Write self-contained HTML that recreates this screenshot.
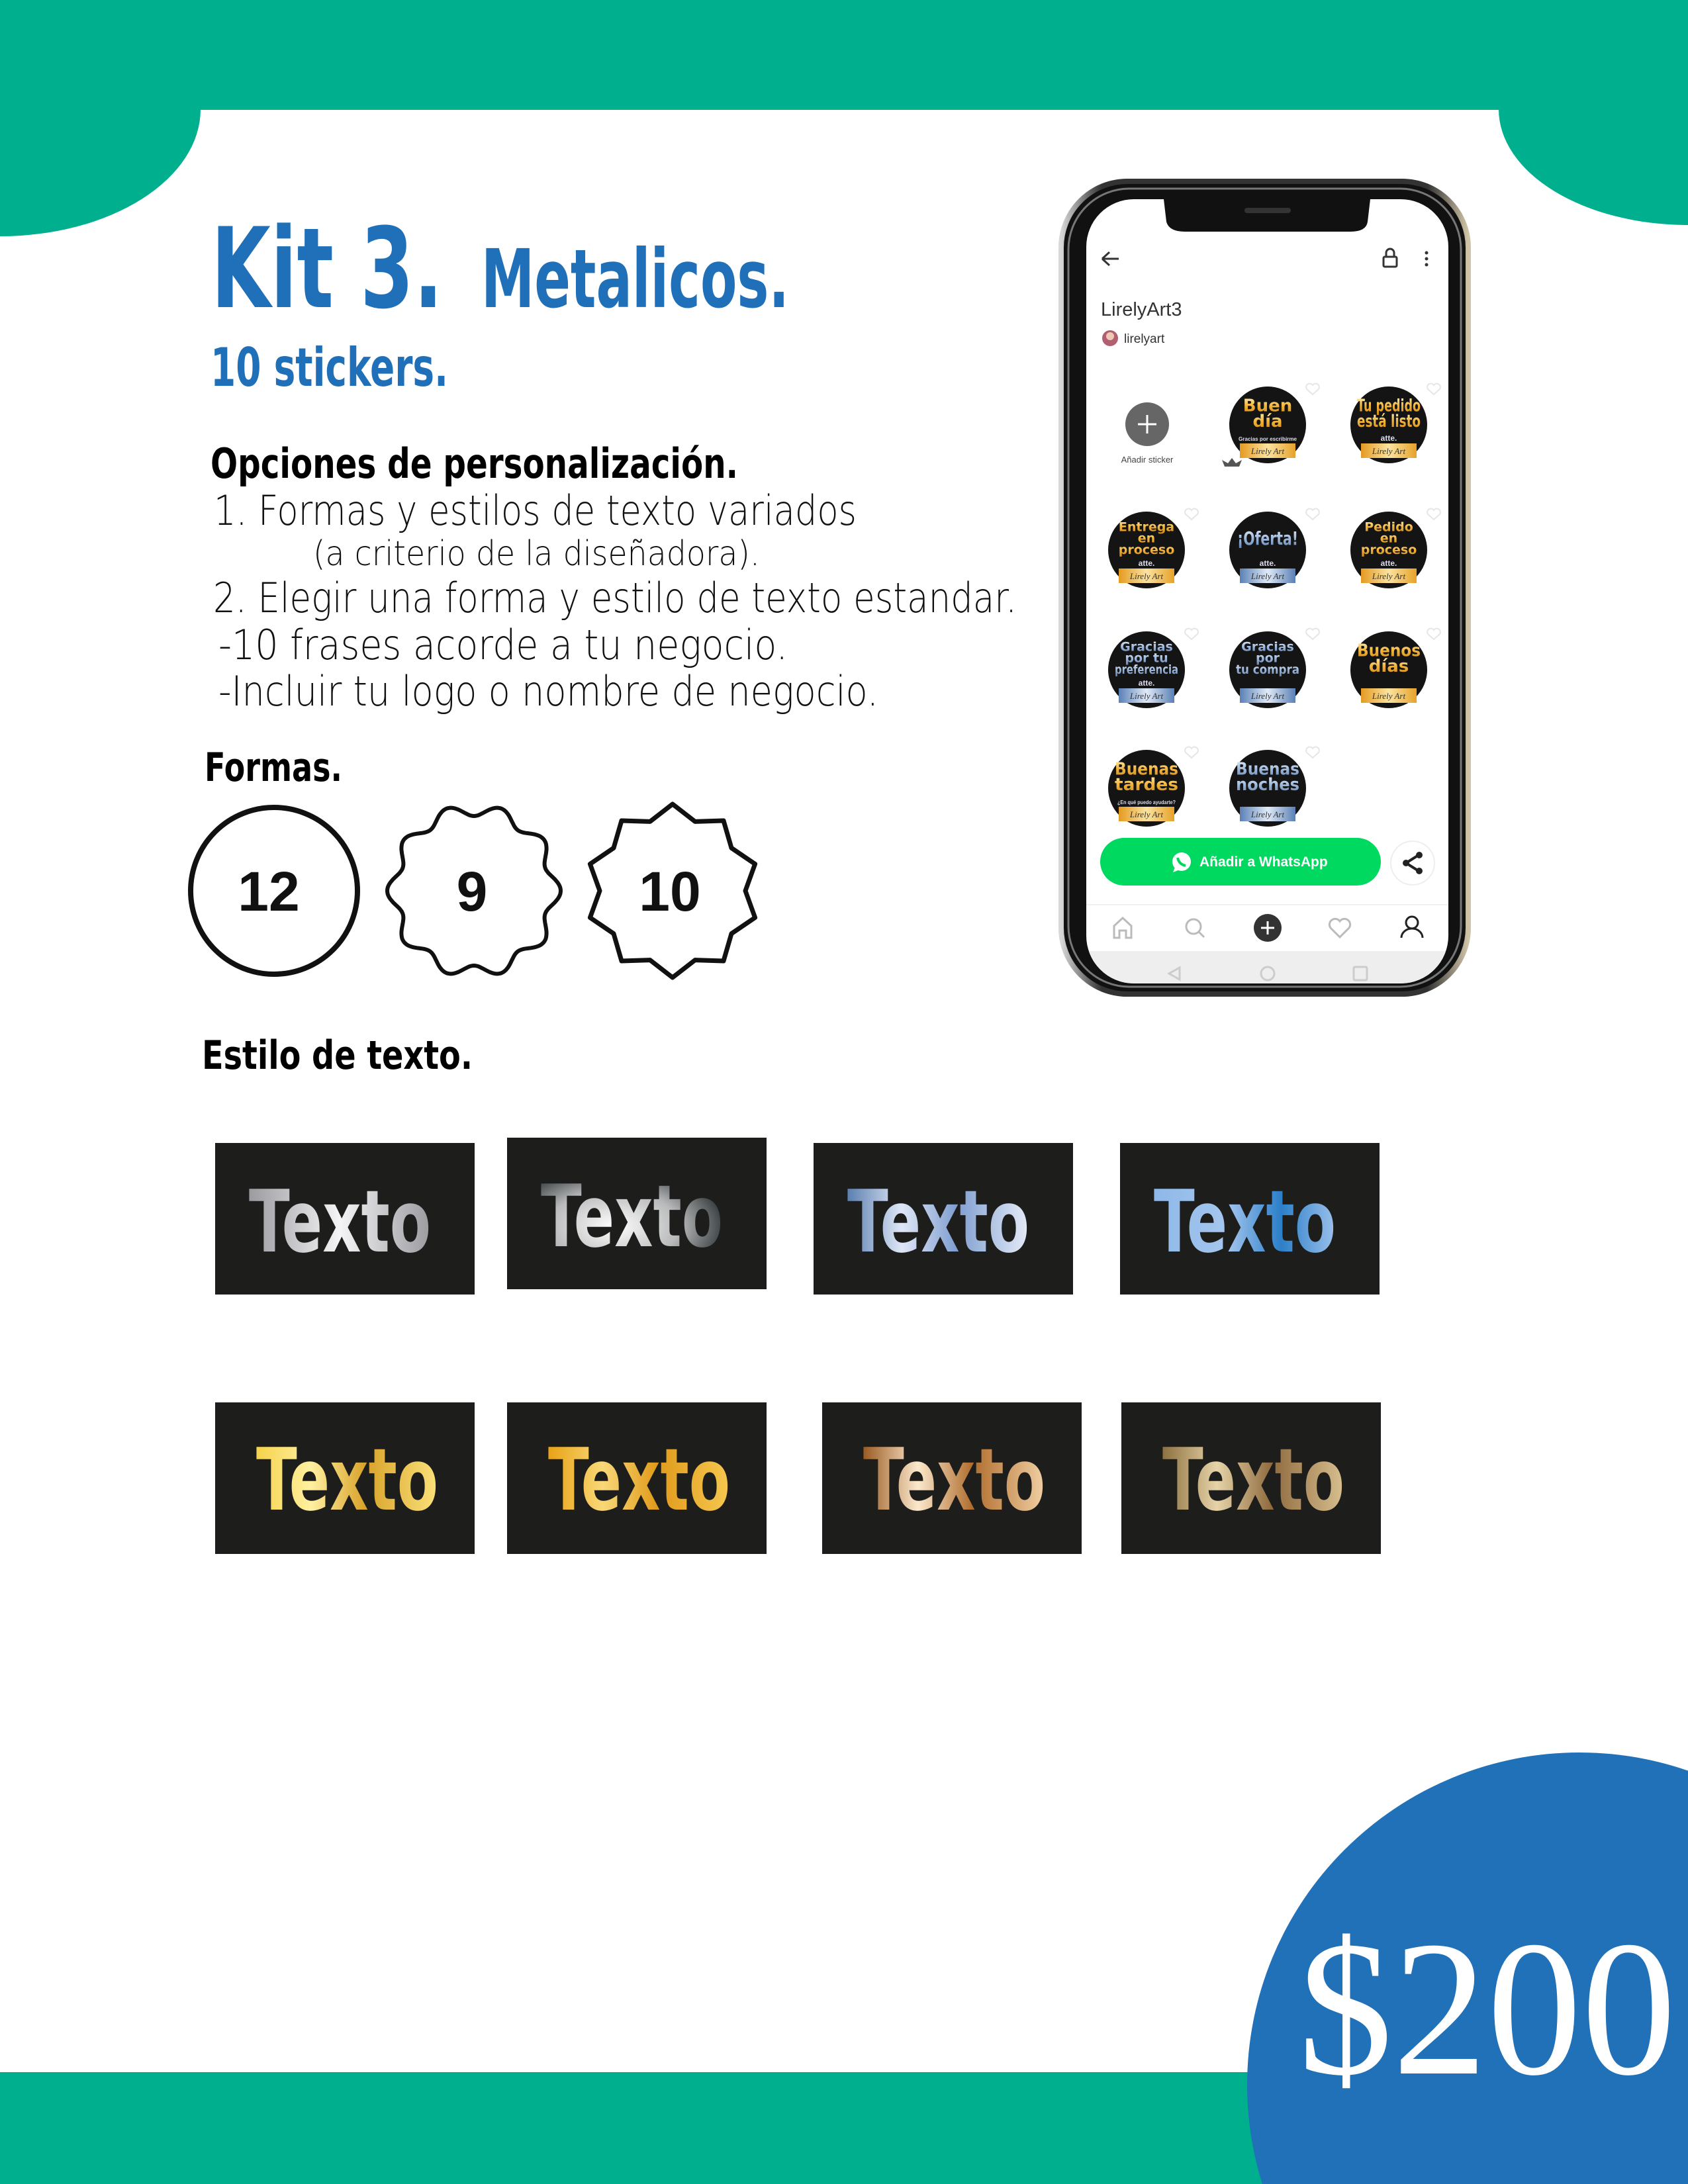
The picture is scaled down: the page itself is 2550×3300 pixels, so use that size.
<!DOCTYPE html>
<html><head><meta charset="utf-8"><style>
html,body{margin:0;padding:0;background:#fff;width:2550px;height:3300px;overflow:hidden}
svg{display:block}
</style></head><body>
<svg id="s" xmlns="http://www.w3.org/2000/svg" width="2550" height="3300" viewBox="0 0 2550 3300">
<defs>
<linearGradient id="g1" x1="0" x2="1" spreadMethod="repeat"><stop offset="0" stop-color="#9b9a9f"/><stop offset=".5" stop-color="#f4f4f6"/><stop offset="1" stop-color="#9b9a9f"/></linearGradient>
<radialGradient id="g2" cx=".4" cy=".6" r=".6"><stop offset="0" stop-color="#ffffff"/><stop offset=".6" stop-color="#b8b9ba"/><stop offset="1" stop-color="#3e4446"/></radialGradient>
<linearGradient id="g3" x1="0" x2="1"><stop offset="0" stop-color="#5b7fb0"/><stop offset=".3" stop-color="#dfe7f7"/><stop offset=".6" stop-color="#7f9ed0"/><stop offset="1" stop-color="#e6ecf8"/></linearGradient>
<linearGradient id="g4" x1="0" x2="1"><stop offset="0" stop-color="#8eb8e8"/><stop offset=".4" stop-color="#a5c6ee"/><stop offset=".7" stop-color="#2c7fc8"/><stop offset="1" stop-color="#9cc1ec"/></linearGradient>
<linearGradient id="g5" x1="0" x2="1"><stop offset="0" stop-color="#f5d24a"/><stop offset=".3" stop-color="#fff0a0"/><stop offset=".6" stop-color="#d8a22a"/><stop offset="1" stop-color="#fbe27a"/></linearGradient>
<linearGradient id="g6" x1="0" x2="1"><stop offset="0" stop-color="#e8a215"/><stop offset=".3" stop-color="#f9d877"/><stop offset=".6" stop-color="#e09a1a"/><stop offset="1" stop-color="#f6c850"/></linearGradient>
<linearGradient id="g7" x1="0" x2="1"><stop offset="0" stop-color="#9a5a22"/><stop offset=".3" stop-color="#fbe8cc"/><stop offset=".6" stop-color="#b06d2e"/><stop offset="1" stop-color="#f1d0a4"/></linearGradient>
<linearGradient id="g8" x1="0" x2="1"><stop offset="0" stop-color="#8c7040"/><stop offset=".3" stop-color="#e6d3a8"/><stop offset=".6" stop-color="#8f6a3e"/><stop offset="1" stop-color="#d8c090"/></linearGradient>
<linearGradient id="gold" x1="0" x2="0" y1="0" y2="1"><stop offset="0" stop-color="#fff0b0"/><stop offset=".5" stop-color="#f2b33a"/><stop offset="1" stop-color="#c98416"/></linearGradient>
<linearGradient id="blue" x1="0" x2="0" y1="0" y2="1"><stop offset="0" stop-color="#e8f0fb"/><stop offset=".5" stop-color="#9fb9dc"/><stop offset="1" stop-color="#5d80b0"/></linearGradient>
<linearGradient id="lgold" x1="0" x2="1"><stop offset="0" stop-color="#e49a20"/><stop offset=".5" stop-color="#fbe3a0"/><stop offset="1" stop-color="#e6a22a"/></linearGradient>
<linearGradient id="lblue" x1="0" x2="1"><stop offset="0" stop-color="#5a80b5"/><stop offset=".5" stop-color="#e0eaf8"/><stop offset="1" stop-color="#5a80b5"/></linearGradient>
<linearGradient id="frame" x1="0" x2="1"><stop offset="0" stop-color="#d8d8d8"/><stop offset=".1" stop-color="#333"/><stop offset=".9" stop-color="#333"/><stop offset="1" stop-color="#d0c4a8"/></linearGradient>
<clipPath id="scr"><rect x="1641" y="301" width="547" height="1185" rx="72"/></clipPath>
</defs>

<rect x="0" y="0" width="2550" height="166" fill="#00AF8E"/>
<ellipse cx="0" cy="165" rx="303" ry="192" fill="#00AF8E"/>
<ellipse cx="2550" cy="165" rx="286" ry="175" fill="#00AF8E"/>
<rect x="0" y="3131" width="2550" height="169" fill="#00AF8E"/>
<circle cx="2386" cy="3150" r="502" fill="#2071B8"/>
<text x="1961" y="3133" font-family="Liberation Serif, serif" font-size="292" fill="#fff" textLength="571" lengthAdjust="spacingAndGlyphs">$200</text>

<g font-family="DejaVu Sans, sans-serif" font-weight="bold" fill="#1F70B8">
<text x="319" y="464" font-size="168" textLength="350" lengthAdjust="spacingAndGlyphs">Kit 3.</text>
<text x="727" y="464" font-size="122" textLength="465" lengthAdjust="spacingAndGlyphs">Metalicos.</text>
<text x="318" y="583" font-size="80" textLength="359" lengthAdjust="spacingAndGlyphs">10 stickers.</text>
</g>
<g font-family="DejaVu Sans, sans-serif" font-weight="bold" fill="#000">
<text x="318" y="722" font-size="62" textLength="797" lengthAdjust="spacingAndGlyphs">Opciones de personalización.</text>
<text x="309" y="1180" font-size="60" textLength="208" lengthAdjust="spacingAndGlyphs">Formas.</text>
<text x="305" y="1615" font-size="60" textLength="409" lengthAdjust="spacingAndGlyphs">Estilo de texto.</text>
</g>
<g font-family="DejaVu Sans, sans-serif" fill="#111" font-size="62" style="font-weight:200">
<text x="323" y="793" textLength="971" lengthAdjust="spacingAndGlyphs">1. Formas y estilos de texto variados</text>
<text x="473" y="854" font-size="52" textLength="675" lengthAdjust="spacingAndGlyphs">(a criterio de la diseñadora).</text>
<text x="322" y="925" textLength="1214" lengthAdjust="spacingAndGlyphs">2. Elegir una forma y estilo de texto estandar.</text>
<text x="330" y="996" textLength="860" lengthAdjust="spacingAndGlyphs">-10 frases acorde a tu negocio.</text>
<text x="330" y="1066" textLength="997" lengthAdjust="spacingAndGlyphs">-Incluir tu logo o nombre de negocio.</text>
</g>

<circle cx="414" cy="1346" r="126" fill="none" stroke="#111" stroke-width="8"/>
<path id="st9" fill="none" stroke="#111" stroke-width="6"/>
<path id="st10" fill="none" stroke="#111" stroke-width="7" stroke-linejoin="round"/>
<g font-family="Liberation Sans, sans-serif" font-weight="bold" font-size="84" fill="#111" text-anchor="middle">
<text x="406" y="1376">12</text>
<text x="713" y="1376">9</text>
<text x="1012" y="1376">10</text>
</g>

<g id="boxes" font-family="DejaVu Sans, sans-serif" font-weight="bold" font-size="130"></g>

<rect x="1603" y="274" width="615" height="1228" rx="100" fill="#111" stroke="url(#frame)" stroke-width="8"/>
<rect x="1614" y="285" width="593" height="1206" rx="92" fill="none" stroke="#777" stroke-width="3"/>
<g clip-path="url(#scr)">
<rect x="1641" y="301" width="547" height="1185" fill="#fff"/>
<path d="M1758 301 L1762 335 Q1766 350 1790 350 L2040 350 Q2064 350 2066 335 L2070 301 Z" fill="#111"/>
<rect x="1880" y="314" width="70" height="8" rx="4" fill="#333"/>
<path d="M1665 391 H1690 M1665 391 L1676 381 M1665 391 L1676 401" stroke="#333" stroke-width="3" fill="none"/>
<rect x="2090" y="388" width="20" height="15" rx="2" fill="none" stroke="#333" stroke-width="3"/>
<path d="M2094 388 V382 a6 6 0 0 1 12 0 V388" fill="none" stroke="#333" stroke-width="3"/>
<circle cx="2155" cy="382" r="2.5" fill="#333"/><circle cx="2155" cy="391" r="2.5" fill="#333"/><circle cx="2155" cy="400" r="2.5" fill="#333"/>
<text x="1663" y="477" font-family="Liberation Sans, sans-serif" font-size="29" fill="#333">LirelyArt3</text>
<circle cx="1677" cy="511" r="12" fill="#b06070"/><circle cx="1677" cy="508" r="6" fill="#f0c8b8"/>
<text x="1698" y="518" font-family="Liberation Sans, sans-serif" font-size="19" fill="#333">lirelyart</text>
<circle cx="1733" cy="641" r="33" fill="#666"/>
<path d="M1733 627 V655 M1719 641 H1747" stroke="#fff" stroke-width="3"/>
<text x="1733" y="699" text-anchor="middle" font-family="Liberation Sans, sans-serif" font-size="13" fill="#444">Añadir sticker</text>
<g id="stk"></g>
<path d="M1850 705 l-4 -10 l9 5 l6 -8 l6 8 l9 -5 l-4 10 z" fill="#555"/>
<rect x="1662" y="1266" width="424" height="72" rx="36" fill="#00D95F"/>
<circle cx="1785" cy="1302" r="14" fill="#fff"/><path d="M1772 1318 l4 -10 l6 6z" fill="#fff"/>
<path d="M1779 1296 q2 10 12 12" stroke="#00D95F" stroke-width="4" fill="none"/>
<text x="1812" y="1309" font-family="Liberation Sans, sans-serif" font-size="21" font-weight="bold" fill="#fff">Añadir a WhatsApp</text>
<circle cx="2134" cy="1304" r="33" fill="#fff" stroke="#eee" stroke-width="2"/>
<path d="M2143 1292 L2124 1304 L2143 1316" stroke="#222" stroke-width="4" fill="none"/>
<circle cx="2144" cy="1292" r="5" fill="#222"/><circle cx="2124" cy="1304" r="5" fill="#222"/><circle cx="2144" cy="1316" r="5" fill="#222"/>
<line x1="1641" y1="1367" x2="2188" y2="1367" stroke="#f0f0f0" stroke-width="2"/>
<path d="M1683 1417 V1399 L1696 1387 L1709 1399 V1417 H1701 V1406 H1691 V1417 Z" fill="none" stroke="#bbb" stroke-width="3"/>
<circle cx="1803" cy="1400" r="11" fill="none" stroke="#bbb" stroke-width="3"/><path d="M1811 1408 L1819 1416" stroke="#bbb" stroke-width="3"/>
<circle cx="1915" cy="1402" r="21" fill="#333"/><path d="M1915 1392 V1412 M1905 1402 H1925" stroke="#fff" stroke-width="3"/>
<path d="M2024 1416 L2010 1402 a8 8 0 0 1 14 -10 a8 8 0 0 1 14 10 Z" fill="none" stroke="#bbb" stroke-width="3"/>
<circle cx="2133" cy="1394" r="9" fill="none" stroke="#222" stroke-width="3"/><path d="M2117 1417 a16 14 0 0 1 32 0" fill="none" stroke="#222" stroke-width="3"/>
<rect x="1641" y="1437" width="547" height="60" fill="#eeeeee"/>
<path d="M1782 1462 L1766 1471 L1782 1480 Z" fill="none" stroke="#ccc" stroke-width="3"/>
<circle cx="1915" cy="1471" r="10" fill="none" stroke="#ccc" stroke-width="3"/>
<rect x="2045" y="1461" width="20" height="20" rx="2" fill="none" stroke="#ccc" stroke-width="3"/>
</g>
</svg>
<script>
var NS="http://www.w3.org/2000/svg";
function el(t,a,p,txt){var e=document.createElementNS(NS,t);for(var k in a)e.setAttribute(k,a[k]);if(txt!=null)e.textContent=txt;p.appendChild(e);return e;}
(function(){var cx=716,cy=1346,d="";for(var i=0;i<=360;i++){var t=i*Math.PI/180;var r=122+9*Math.cos(10*t+Math.PI);var a=t-Math.PI/2;var x=cx+r*Math.cos(a),y=cy+r*Math.sin(a);d+=(i?"L":"M")+x.toFixed(1)+" "+y.toFixed(1);}document.getElementById("st9").setAttribute("d",d+"Z");
var cx2=1016,d2="";for(var j=0;j<20;j++){var r2=j%2?110:131;var a2=j*Math.PI/10-Math.PI/2;d2+=(j?"L":"M")+(cx2+r2*Math.cos(a2)).toFixed(1)+" "+(cy+r2*Math.sin(a2)).toFixed(1);}document.getElementById("st10").setAttribute("d",d2+"Z");})();
(function(){var g=document.getElementById("boxes");
var B=[[325,1727,"g1"],[766,1719,"g2"],[1229,1727,"g3"],[1692,1727,"g4"],[325,2119,"g5"],[766,2119,"g6"],[1242,2119,"g7"],[1694,2119,"g8"]];
B.forEach(function(b,i){el("rect",{x:b[0],y:b[1],width:392,height:229,fill:"#1d1d1b"},g);
var off=i<4?51:62;var by=i<4?164:162;
el("text",{x:b[0]+off,y:b[1]+by,fill:"url(#"+b[2]+")",textLength:275,lengthAdjust:"spacingAndGlyphs"},g,"Texto");});})();
(function(){var g=document.getElementById("stk");var cols=[1732,1915,2098],rows=[642,831,1012,1191];
var S=[[1,0,["Buen","día"],"gold","Gracias por escribirme"],[2,0,["Tu pedido","está listo"],"gold","atte."],[0,1,["Entrega","en","proceso"],"gold","atte."],[1,1,["¡Oferta!"],"blue","atte."],[2,1,["Pedido","en","proceso"],"gold","atte."],[0,2,["Gracias","por tu","preferencia"],"blue","atte."],[1,2,["Gracias","por","tu compra"],"blue",""],[2,2,["Buenos","días"],"gold",""],[0,3,["Buenas","tardes"],"gold","¿En qué puedo ayudarte?"],[1,3,["Buenas","noches"],"blue",""]];
S.forEach(function(s){var cx=cols[s[0]],cy=rows[s[1]];
el("circle",{cx:cx,cy:cy,r:58,fill:"#141414"},g);
var n=s[2].length,fs=n==1?28:(n==2?26:19),y0=cy-18-(n-1)*fs*0.45+fs*0.35;
s[2].forEach(function(t,k){var a={x:cx,y:y0+k*fs*0.9,"text-anchor":"middle","font-family":"DejaVu Sans, sans-serif","font-weight":"bold","font-size":fs,fill:"url(#"+s[3]+")"};
var est=t.length*fs*0.62;var maxw=(n==1)?92:(k==0&&n==3?88:96);if(est>maxw){a.textLength=maxw;a.lengthAdjust="spacingAndGlyphs";}
el("text",a,g,t);});
if(s[4]){var a2={x:cx,y:cy+24,"text-anchor":"middle","font-family":"Liberation Sans, sans-serif","font-size":s[4].length>6?8:12,"font-weight":"bold",fill:"#dde"};if(s[4].length>6){a2.textLength=88;a2.lengthAdjust="spacingAndGlyphs";}el("text",a2,g,s[4]);}
el("rect",{x:cx-42,y:cy+28,width:84,height:22,fill:"url(#l"+s[3]+")"},g);
el("text",{x:cx,y:cy+44,"text-anchor":"middle","font-family":"Liberation Serif, serif","font-style":"italic","font-size":13,fill:"#333"},g,"Lirely Art");
});
[[1,0],[2,0],[0,1],[1,1],[2,1],[0,2],[1,2],[2,2],[0,3],[1,3]].forEach(function(h){var x=cols[h[0]]+68,y=rows[h[1]]-54;
el("path",{d:"M"+x+" "+(y+8)+" l-9 -8 a5 5 0 0 1 9 -6 a5 5 0 0 1 9 6 z",fill:"none",stroke:"#e6e6e6","stroke-width":2},g);});
})();
</script>
</body></html>
